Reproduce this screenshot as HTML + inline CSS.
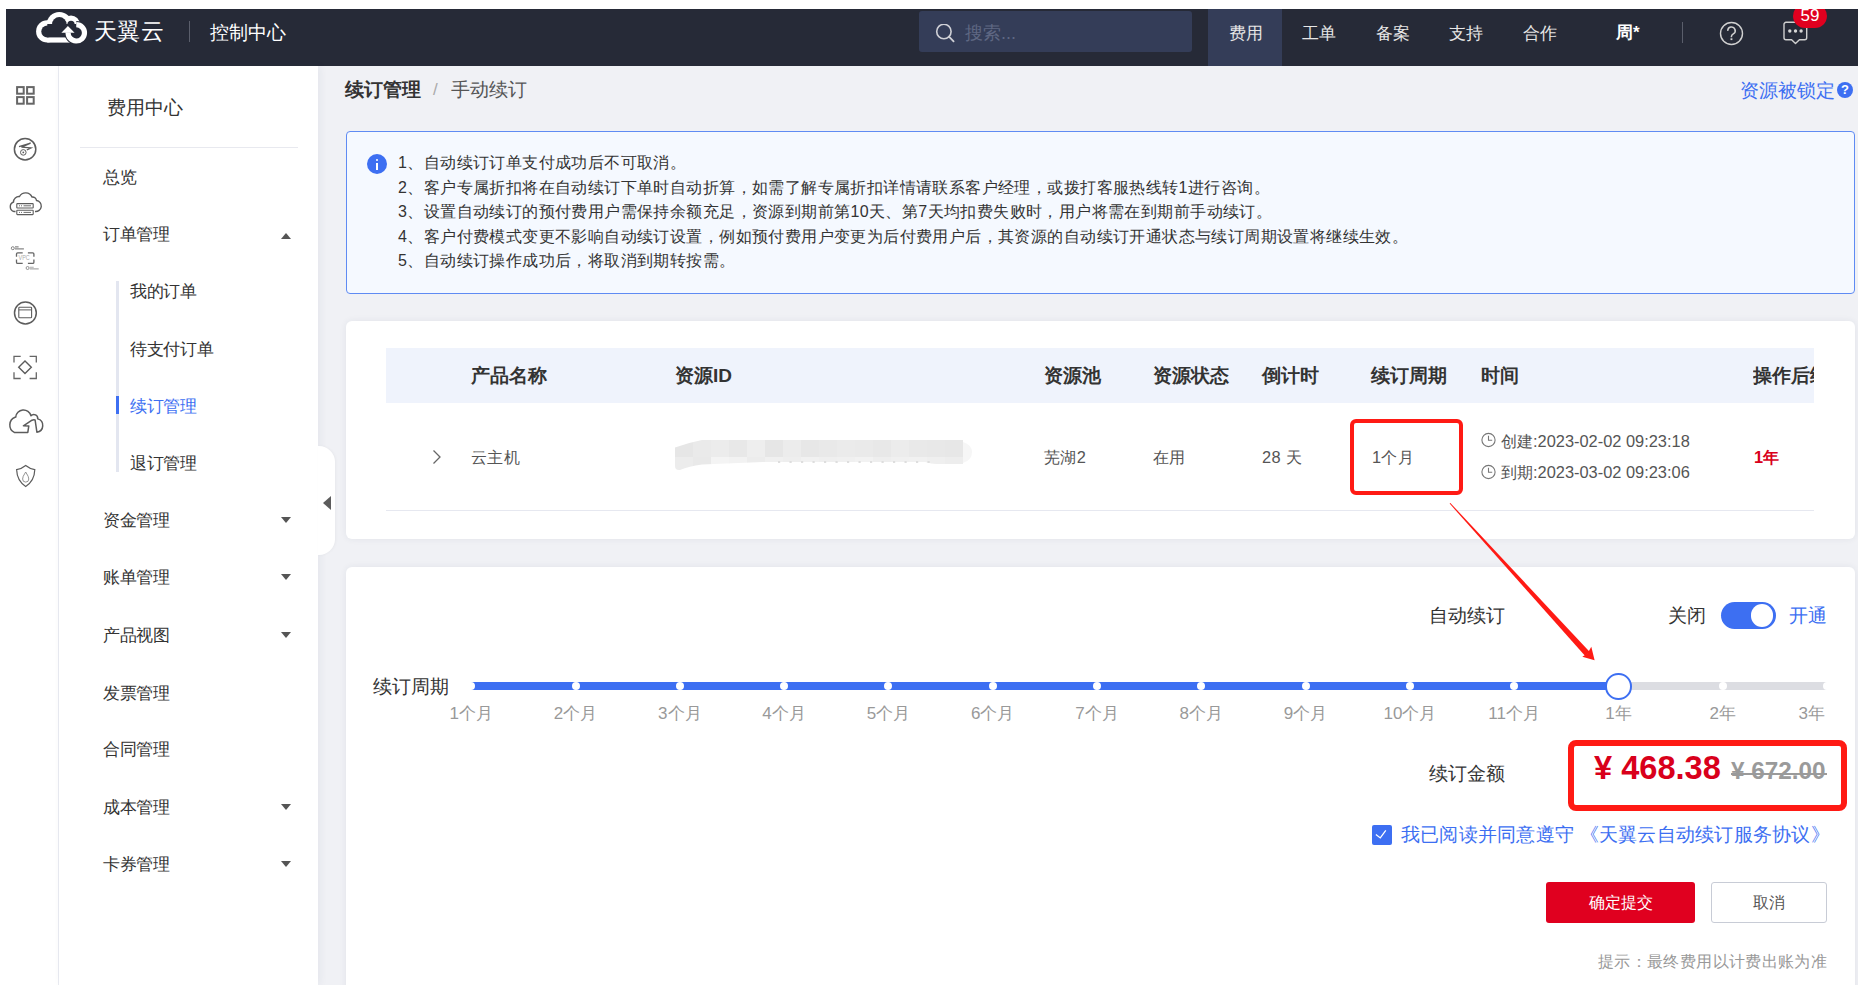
<!DOCTYPE html>
<html><head><meta charset="utf-8">
<style>
*{box-sizing:border-box;margin:0;padding:0}
html,body{width:1865px;height:1007px;overflow:hidden;background:#fff;font-family:"Liberation Sans",sans-serif;color:#333}
.a{position:absolute;white-space:nowrap}
#app{position:absolute;left:6px;top:9px;width:1852px;height:976px;background:#f0f1f5;overflow:hidden}
#hdr{position:absolute;left:0;top:0;width:1852px;height:57px;background:#262a37;overflow:hidden}
#rail{position:absolute;left:0;top:57px;width:53px;height:919px;background:#fff;border-right:1px solid #eaecf2}
#menu{position:absolute;left:53px;top:57px;width:259px;height:919px;background:#fff;box-shadow:2px 0 8px rgba(40,50,90,0.06)}
.mi{position:absolute;left:103px;font-size:17px;letter-spacing:-0.4px;line-height:24px;color:#333}
.tri-d{position:absolute;left:281px;width:0;height:0;border-left:5px solid transparent;border-right:5px solid transparent;border-top:6px solid #555}
.tri-u{position:absolute;left:281px;width:0;height:0;border-left:5px solid transparent;border-right:5px solid transparent;border-bottom:6px solid #555}
.sub{position:absolute;left:130px;font-size:17px;letter-spacing:-0.3px;line-height:24px;color:#333}
.card{position:absolute;background:#fff;border-radius:6px;box-shadow:0 0 7px rgba(40,50,90,0.07)}
.th{position:absolute;top:0;font-size:19px;font-weight:bold;line-height:55px;color:#333}
.td{position:absolute;font-size:16.4px;letter-spacing:0.35px;line-height:24px;color:#555}
.lbl{position:absolute;font-size:17px;line-height:24px;color:#999;text-align:center;width:80px}
.dot{position:absolute;width:8px;height:8px;border-radius:50%;background:#fff}
</style></head><body>
<div id="app">
  <div id="hdr">
    <svg class="a" style="left:24px;top:0" width="70" height="41" viewBox="0 0 70 41">
      <defs><mask id="cm"><rect width="70" height="41" fill="#fff"/><g fill="#000"><circle cx="17.3" cy="22.4" r="6.0"/><circle cx="29.3" cy="15.4" r="7.3"/><circle cx="41" cy="15.3" r="3.6"/><circle cx="46.3" cy="23.8" r="5.6"/><rect x="17.3" y="15" width="29" height="13.4"/></g></mask></defs>
      <g fill="#fff" mask="url(#cm)"><circle cx="17.3" cy="22.4" r="11.2"/><circle cx="29.3" cy="15.4" r="12.5"/><circle cx="41" cy="15.3" r="8.8"/><circle cx="46.3" cy="23.8" r="10.8"/><rect x="17.3" y="15" width="29" height="18.6"/></g>
      <path d="M38.1 23.8 A8.2 8.2 0 1 0 46.3 15.6" fill="none" stroke="#262a37" stroke-width="7.4"/>
      <path d="M38.1 23.3 A8.2 8.2 0 1 0 46.3 15.6" fill="none" stroke="#fff" stroke-width="5.2"/>
      <path d="M31.4 23.8 L37.9 17.1 L44.6 23.8 Z" fill="#fff"/>
    </svg>
    <div class="a" style="left:88px;top:7px;font-size:23px;line-height:30px;color:#fff;letter-spacing:0.4px">天翼云</div>
    <div class="a" style="left:183px;top:12px;width:1px;height:21px;background:#5a5e6b"></div>
    <div class="a" style="left:204px;top:11px;font-size:19px;line-height:26px;color:#fff">控制中心</div>
    <div class="a" style="left:913px;top:2px;width:273px;height:41px;background:#343d58;border-radius:3px"></div>
    <svg class="a" style="left:929px;top:15px" width="22" height="20" viewBox="0 0 22 20"><circle cx="8.9" cy="7.5" r="7.2" fill="none" stroke="#cfd0d6" stroke-width="1.6"/><path d="M14 12.7 L18.6 17.4" stroke="#cfd0d6" stroke-width="1.8" stroke-linecap="round"/></svg>
    <div class="a" style="left:959px;top:11px;font-size:18px;line-height:26px;color:#5f6883">搜索...</div>
    <div class="a" style="left:1202px;top:0;width:74px;height:57px;background:#343d58"></div>
    <div class="a" style="left:1223px;top:13px;font-size:17px;line-height:24px;color:#e6e6e6">费用</div>
    <div class="a" style="left:1296px;top:13px;font-size:17px;line-height:24px;color:#e6e6e6">工单</div>
    <div class="a" style="left:1370px;top:13px;font-size:17px;line-height:24px;color:#e6e6e6">备案</div>
    <div class="a" style="left:1443px;top:13px;font-size:17px;line-height:24px;color:#e6e6e6">支持</div>
    <div class="a" style="left:1517px;top:13px;font-size:17px;line-height:24px;color:#e6e6e6">合作</div>
    <div class="a" style="left:1610px;top:12px;font-size:17px;line-height:24px;color:#fff;font-weight:bold">周*</div>
    <div class="a" style="left:1676px;top:13px;width:1px;height:21px;background:#5a5e6b"></div>
    <svg class="a" style="left:1712px;top:12px" width="26" height="26" viewBox="0 0 26 26"><circle cx="13.5" cy="12.5" r="11" fill="none" stroke="#d0d0d0" stroke-width="1.4"/><path d="M9.8 9.9 A3.7 3.7 0 1 1 15.3 12.9 Q13.4 14.1 13.4 15.6 V16.3" fill="none" stroke="#d0d0d0" stroke-width="1.5"/><rect x="12.5" y="17.3" width="1.9" height="1.8" fill="#d0d0d0"/></svg>
    <svg class="a" style="left:1776px;top:12px" width="28" height="26" viewBox="0 0 28 26"><path d="M4 1.3 H22.7 A2 2 0 0 1 24.7 3.3 V16.7 A2 2 0 0 1 22.7 18.7 H17.4 L13.5 22.6 L9.6 18.7 H4 A2 2 0 0 1 2 16.7 V3.3 A2 2 0 0 1 4 1.3 Z" fill="none" stroke="#cfcfcf" stroke-width="1.4" stroke-linejoin="round"/><circle cx="7.8" cy="10" r="1.7" fill="#d6d6d6"/><circle cx="13.5" cy="10" r="1.7" fill="#d6d6d6"/><circle cx="19.1" cy="10" r="1.7" fill="#d6d6d6"/></svg>
    <div class="a" style="left:1786.8px;top:-5.2px;width:34.2px;height:24px;border-radius:12px;background:#e0001f"></div><div class="a" style="left:1786.8px;top:-3px;width:34.2px;font-size:17px;line-height:19px;text-align:center;color:#fff">59</div>
  </div>

  <div id="rail"></div>
  <div id="menu"></div>
</div>
<!-- rail icons (absolute) -->
<svg class="a" style="left:0;top:66px" width="58" height="440" viewBox="0 66 58 440" fill="none" stroke="#5c5c5c" stroke-width="1.5">
  <g stroke-width="2" stroke="#666"><rect x="17.1" y="87.1" width="6.6" height="6.6"/><rect x="27.1" y="87.1" width="6.6" height="6.6"/><rect x="17.1" y="97.1" width="6.6" height="6.6"/><rect x="27.1" y="97.1" width="6.6" height="6.6"/></g>
  <circle cx="25.1" cy="149.2" r="10.7"/>
  <path d="M19 146.6 L30.6 143.2 L21.5 147.2 L31 147.9 L26.8 150" stroke-width="1.3"/>
  <circle cx="23.3" cy="152.4" r="2.8" stroke-width="1"/><circle cx="23.3" cy="152.4" r="0.9" fill="#5c5c5c" stroke="none"/>
  <path d="M15.5 211.5 H14 A5 5 0 0 1 13.5 202 A5.5 5.5 0 0 1 19.5 196.5 A7 7 0 0 1 32 197 A4 4 0 0 1 36.5 200.5 A5.5 5.5 0 0 1 35 211.5" stroke-width="1.4"/>
  <rect x="16.8" y="203.6" width="16.4" height="4.4" rx="0.6" stroke-width="1.1"/><rect x="16.8" y="210.2" width="16.4" height="4.4" rx="0.6" stroke-width="1.1"/>
  <path d="M19 205.8 H20 M21 205.8 H22 M23.5 205.8 H31 M19 212.4 H20 M21 212.4 H22 M23.5 212.4 H31" stroke-width="0.9"/>
  <path d="M16.5 256.7 V254 Q16.5 252.8 17.7 252.8 H22.7 M27.9 252.8 H32.7 Q33.9 252.8 33.9 254 V256.7 M33.9 259.5 V262.2 Q33.9 263.4 32.7 263.4 H27.9 M22.7 263.4 H17.7 Q16.5 263.4 16.5 262.2 V259.5" stroke-width="1.3" stroke="#666"/>
  <text x="24.2" y="260.4" font-size="6.6" font-family="Liberation Sans" fill="#aaa" stroke="none" text-anchor="middle" textLength="11.2" lengthAdjust="spacingAndGlyphs">VPC</text>
  <circle cx="12.8" cy="248.2" r="1.5" stroke-width="0.9" stroke="#777"/><path d="M15 246.9 H18.6 M15 248.9 H23.9" stroke-width="1.1" stroke="#888"/>
  <circle cx="27.6" cy="268" r="1.5" stroke-width="0.9" stroke="#888"/><path d="M29.8 267.3 H33.7 M29.8 268.9 H38.7" stroke-width="1.1" stroke="#aaa"/>
  <circle cx="25.4" cy="313" r="10.9"/>
  <rect x="18.8" y="307.2" width="12.8" height="10.6" rx="0.8" stroke-width="1.1"/><path d="M18.8 309.9 H31.6" stroke-width="1"/>
  <path d="M14 362.6 V356.4 H20.7 M29.6 356.4 H36.3 V362.6 M36.3 372.3 V378.5 H29.6 M20.7 378.5 H14 V372.3" stroke-width="1.3" stroke="#666"/>
  <path d="M25 361 L31.3 367.3 L25 373.6 L18.7 367.3 Z" stroke-width="1.4"/>
  <path d="M14.3 432.4 H27.8 L28.8 425.9 L23.4 425.8 L32 420.2 Q33.5 419.6 35.1 420 L36.9 432.2 A6.8 6.8 0 0 0 37.7 418.9 A3.9 3.9 0 0 0 31 415.7 A7.8 7.8 0 0 0 15.7 417.1 L15.1 417.3 A8.3 8.3 0 0 0 14.3 432.4 Z" stroke-width="1.5" stroke-linejoin="round"/>
  <path d="M25.7 465.5 Q30 469 34.8 469.6 Q34.5 481 25.7 486.5 Q17 481 16.6 469.6 Q21.4 469 25.7 465.5 Z" stroke-width="1.2"/>
  <path d="M25.7 472 Q22.3 477 22.6 479 A3.1 3.1 0 0 0 28.8 479 Q29 477 25.7 472 Z" stroke-width="0.9" stroke="#888"/>
</svg>
<!-- menu -->
<div class="a" style="left:107px;top:95px;font-size:19px;line-height:26px;color:#333">费用中心</div>
<div class="a" style="left:80px;top:147px;width:218px;height:1px;background:#e8e9ef"></div>
<div class="mi" style="top:166px">总览</div>
<div class="mi" style="top:223px">订单管理</div><div class="tri-u" style="top:233px"></div>
<div class="a" style="left:116px;top:281px;width:3px;height:191px;background:#e3e6f0"></div>
<div class="a" style="left:116px;top:396px;width:3px;height:18px;background:#3d6ff2"></div>
<div class="sub" style="top:280px">我的订单</div>
<div class="sub" style="top:338px">待支付订单</div>
<div class="sub" style="top:395px;color:#3d6ff2">续订管理</div>
<div class="sub" style="top:452px">退订管理</div>
<div class="mi" style="top:509px">资金管理</div><div class="tri-d" style="top:517px"></div>
<div class="mi" style="top:566px">账单管理</div><div class="tri-d" style="top:574px"></div>
<div class="mi" style="top:624px">产品视图</div><div class="tri-d" style="top:632px"></div>
<div class="mi" style="top:682px">发票管理</div>
<div class="mi" style="top:738px">合同管理</div>
<div class="mi" style="top:796px">成本管理</div><div class="tri-d" style="top:804px"></div>
<div class="mi" style="top:853px">卡券管理</div><div class="tri-d" style="top:861px"></div>
<!-- collapse handle -->
<div class="a" style="left:318px;top:446px;width:17px;height:109px;background:#fff;border-radius:0 16px 16px 0;box-shadow:1px 0 3px rgba(0,0,0,0.04)"></div>
<div class="a" style="left:323px;top:496px;width:0;height:0;border-top:7.5px solid transparent;border-bottom:7.5px solid transparent;border-right:8px solid #5c5c5c"></div>
<!-- breadcrumb -->
<div class="a" style="left:345px;top:77px;font-size:19px;line-height:26px;font-weight:bold;color:#333">续订管理</div>
<div class="a" style="left:433px;top:77px;font-size:17px;line-height:26px;color:#aaa">/</div>
<div class="a" style="left:451px;top:77px;font-size:19px;line-height:26px;color:#555">手动续订</div>
<div class="a" style="left:1740px;top:78px;font-size:19px;line-height:26px;color:#3d6ff2">资源被锁定</div>
<div class="a" style="left:1837px;top:82px;width:16px;height:16px;border-radius:50%;background:#3d6ff2;color:#fff;font-size:13px;line-height:16px;text-align:center;font-weight:bold">?</div>
<!-- info box -->
<div class="a" style="left:346px;top:131px;width:1509px;height:163px;background:#f5f9ff;border:1px solid #5f8bf3;border-radius:4px"></div>
<div class="a" style="left:367px;top:154px;width:20px;height:20px;border-radius:50%;background:#3d6ff2"></div>
<div class="a" style="left:376px;top:159px;width:2.4px;height:2.4px;background:#fff;border-radius:50%"></div>
<div class="a" style="left:376px;top:163px;width:2.4px;height:7px;background:#fff"></div>
<div class="a" style="left:398px;top:151px;font-size:16px;letter-spacing:0.41px;line-height:24.6px;color:#333">1、自动续订订单支付成功后不可取消。<br>2、客户专属折扣将在自动续订下单时自动折算，如需了解专属折扣详情请联系客户经理，或拨打客服热线转1进行咨询。<br>3、设置自动续订的预付费用户需保持余额充足，资源到期前第10天、第7天均扣费失败时，用户将需在到期前手动续订。<br>4、客户付费模式变更不影响自动续订设置，例如预付费用户变更为后付费用户后，其资源的自动续订开通状态与续订周期设置将继续生效。<br>5、自动续订操作成功后，将取消到期转按需。</div>
<!-- card 1 -->
<div class="card" style="left:346px;top:321px;width:1509px;height:218px"></div>
<div class="a" style="left:386px;top:348px;width:1428px;height:55px;background:#eff3fc"></div>
<div class="th" style="left:471px;top:348px">产品名称</div>
<div class="th" style="left:675px;top:348px">资源ID</div>
<div class="th" style="left:1044px;top:348px">资源池</div>
<div class="th" style="left:1153px;top:348px">资源状态</div>
<div class="th" style="left:1262px;top:348px">倒计时</div>
<div class="th" style="left:1371px;top:348px">续订周期</div>
<div class="th" style="left:1481px;top:348px">时间</div>
<div class="a" style="left:1753px;top:348px;width:61px;height:55px;overflow:hidden"><div class="th" style="left:0;top:0">操作后续订</div></div>
<svg class="a" style="left:430px;top:449px" width="14" height="16" viewBox="0 0 14 16"><path d="M3.5 1.5 L10 8 L3.5 14.5" fill="none" stroke="#666" stroke-width="1.3"/></svg>
<div class="td" style="left:471px;top:445px">云主机</div>
<svg class="a" style="left:675px;top:440px" width="300" height="31" viewBox="0 0 300 31"><defs><clipPath id="bl"><path d="M0 7.5 Q14 2.5 27 0 H288 V24 H263 Q258 24.5 250 22 H88 L27 24.5 Q14 26 5 30 Q0 30.5 0 26 Z"/></clipPath></defs><g clip-path="url(#bl)"><rect x="0.0" y="0" width="18.5" height="17.2" fill="rgb(230,230,230)"/><rect x="0.0" y="17" width="18.5" height="14" fill="rgb(236,236,236)"/><rect x="18.0" y="0" width="18.5" height="17.2" fill="rgb(234,234,234)"/><rect x="18.0" y="17" width="18.5" height="14" fill="rgb(233,233,233)"/><rect x="36.0" y="0" width="18.5" height="17.2" fill="rgb(236,236,236)"/><rect x="36.0" y="17" width="18.5" height="14" fill="rgb(244,244,244)"/><rect x="54.0" y="0" width="18.5" height="17.2" fill="rgb(232,232,232)"/><rect x="54.0" y="17" width="18.5" height="14" fill="rgb(242,242,242)"/><rect x="72.0" y="0" width="18.5" height="17.2" fill="rgb(238,238,238)"/><rect x="72.0" y="17" width="18.5" height="14" fill="rgb(236,236,236)"/><rect x="90.0" y="0" width="18.5" height="17.2" fill="rgb(230,230,230)"/><rect x="90.0" y="17" width="18.5" height="14" fill="rgb(240,240,240)"/><rect x="108.0" y="0" width="18.5" height="17.2" fill="rgb(236,236,236)"/><rect x="108.0" y="17" width="18.5" height="14" fill="rgb(238,238,238)"/><rect x="126.0" y="0" width="18.5" height="17.2" fill="rgb(231,231,231)"/><rect x="126.0" y="17" width="18.5" height="14" fill="rgb(241,241,241)"/><rect x="144.0" y="0" width="18.5" height="17.2" fill="rgb(233,233,233)"/><rect x="144.0" y="17" width="18.5" height="14" fill="rgb(239,239,239)"/><rect x="162.0" y="0" width="18.5" height="17.2" fill="rgb(235,235,235)"/><rect x="162.0" y="17" width="18.5" height="14" fill="rgb(240,240,240)"/><rect x="180.0" y="0" width="18.5" height="17.2" fill="rgb(234,234,234)"/><rect x="180.0" y="17" width="18.5" height="14" fill="rgb(242,242,242)"/><rect x="198.0" y="0" width="18.5" height="17.2" fill="rgb(232,232,232)"/><rect x="198.0" y="17" width="18.5" height="14" fill="rgb(238,238,238)"/><rect x="216.0" y="0" width="18.5" height="17.2" fill="rgb(236,236,236)"/><rect x="216.0" y="17" width="18.5" height="14" fill="rgb(240,240,240)"/><rect x="234.0" y="0" width="18.5" height="17.2" fill="rgb(233,233,233)"/><rect x="234.0" y="17" width="18.5" height="14" fill="rgb(241,241,241)"/><rect x="252.0" y="0" width="18.5" height="17.2" fill="rgb(232,232,232)"/><rect x="252.0" y="17" width="18.5" height="14" fill="rgb(239,239,239)"/><rect x="270.0" y="0" width="18.5" height="17.2" fill="rgb(231,231,231)"/><rect x="270.0" y="17" width="18.5" height="14" fill="rgb(237,237,237)"/></g><path d="M288 2 Q297 5 297 12 Q297 20 288 23" fill="#f6f6f6"/><g fill="#dedede"><rect x="103.0" y="21" width="2.2" height="2" /><rect x="114.5" y="21" width="2.2" height="2" /><rect x="126.0" y="21" width="2.2" height="2" /><rect x="137.5" y="21" width="2.2" height="2" /><rect x="149.0" y="21" width="2.2" height="2" /><rect x="160.5" y="21" width="2.2" height="2" /><rect x="172.0" y="21" width="2.2" height="2" /><rect x="183.5" y="21" width="2.2" height="2" /><rect x="195.0" y="21" width="2.2" height="2" /><rect x="206.5" y="21" width="2.2" height="2" /><rect x="218.0" y="21" width="2.2" height="2" /><rect x="229.5" y="21" width="2.2" height="2" /><rect x="241.0" y="21" width="2.2" height="2" /><rect x="252.5" y="21" width="2.2" height="2" /></g></svg>
<div class="td" style="left:1044px;top:445px">芜湖2</div>
<div class="td" style="left:1153px;top:445px">在用</div>
<div class="td" style="left:1262px;top:445px">28 天</div>
<div class="td" style="left:1372px;top:445px">1个月</div>
<svg class="a" style="left:1480px;top:432px" width="17" height="48" viewBox="0 0 17 48" fill="none" stroke="#777" stroke-width="1.1"><circle cx="8.5" cy="8" r="6.6"/><path d="M8.5 3.8 V8.3 H12.2"/><circle cx="8.5" cy="40" r="6.6"/><path d="M8.5 35.8 V40.3 H12.2"/></svg>
<div class="td" style="left:1501px;top:429px;letter-spacing:0">创建:2023-02-02 09:23:18</div>
<div class="td" style="left:1501px;top:460px;letter-spacing:0">到期:2023-03-02 09:23:06</div>
<div class="td" style="left:1754px;top:445px;color:#d9001b;font-weight:bold">1年</div>
<div class="a" style="left:386px;top:510px;width:1428px;height:1px;background:#e6e8f0"></div>
<div class="a" style="left:1350px;top:419px;width:113px;height:76px;border:4.6px solid #ff1a14;border-radius:6px"></div>
<!-- card 2 -->
<div class="card" style="left:346px;top:567px;width:1509px;height:430px"></div>
<div class="a" style="left:1429px;top:603px;font-size:19px;line-height:26px;color:#333">自动续订</div>
<div class="a" style="left:1668px;top:603px;font-size:19px;line-height:26px;color:#333">关闭</div>
<div class="a" style="left:1721px;top:602px;width:55px;height:27px;border-radius:14px;background:#3d6ff2"></div>
<div class="a" style="left:1750.6px;top:603.8px;width:22.8px;height:22.8px;border-radius:50%;background:#fff"></div>
<div class="a" style="left:1789px;top:603px;font-size:19px;line-height:26px;color:#3d6ff2">开通</div>
<div class="a" style="left:373px;top:674px;font-size:19px;line-height:26px;color:#333">续订周期</div>
<div class="a" style="left:471px;top:682px;width:1356px;height:8px;background:#dcdde2"></div>
<div class="a" style="left:471px;top:682px;width:1148px;height:8px;background:#3d6ff2"></div><div class="dot" style="left:467.2px;top:682px"></div>
<div class="dot" style="left:571.5px;top:682px"></div><div class="dot" style="left:675.8px;top:682px"></div><div class="dot" style="left:780.1px;top:682px"></div><div class="dot" style="left:884.4px;top:682px"></div><div class="dot" style="left:988.7px;top:682px"></div><div class="dot" style="left:1093.0px;top:682px"></div><div class="dot" style="left:1197.3px;top:682px"></div><div class="dot" style="left:1301.6px;top:682px"></div><div class="dot" style="left:1405.9px;top:682px"></div><div class="dot" style="left:1510.2px;top:682px"></div><div class="dot" style="left:1718.8px;top:682px"></div><div class="dot" style="left:1823.1px;top:682px"></div>
<div class="a" style="left:1605.1px;top:673px;width:26.6px;height:26.6px;border-radius:50%;background:#fff;border:2.5px solid #3d6ff2"></div>
<div class="lbl" style="left:431.2px;top:702px">1个月</div><div class="lbl" style="left:535.5px;top:702px">2个月</div><div class="lbl" style="left:639.8px;top:702px">3个月</div><div class="lbl" style="left:744.1px;top:702px">4个月</div><div class="lbl" style="left:848.4px;top:702px">5个月</div><div class="lbl" style="left:952.7px;top:702px">6个月</div><div class="lbl" style="left:1057.0px;top:702px">7个月</div><div class="lbl" style="left:1161.3px;top:702px">8个月</div><div class="lbl" style="left:1265.6px;top:702px">9个月</div><div class="lbl" style="left:1369.9px;top:702px">10个月</div><div class="lbl" style="left:1474.2px;top:702px">11个月</div><div class="lbl" style="left:1578.5px;top:702px">1年</div><div class="lbl" style="left:1682.8px;top:702px">2年</div><div class="lbl" style="left:1745.0px;top:702px;text-align:right">3年</div>
<div class="a" style="left:1429px;top:761px;font-size:19px;line-height:26px;color:#333">续订金额</div>
<div class="a" style="left:1567.5px;top:739.5px;width:279px;height:71px;border:6.2px solid #ff1a14;border-radius:8px"></div>
<div class="a" style="left:1594px;top:749.5px;font-size:32.6px;line-height:36px;font-weight:bold;color:#d9001b">¥ 468.38</div>
<div class="a" style="left:1731px;top:757.3px;font-size:24.3px;line-height:28px;font-weight:bold;color:#9a9a9a">¥ 672.00</div><div class="a" style="left:1731px;top:772.5px;width:96px;height:2px;background:#9a9a9a"></div>
<div class="a" style="left:1372px;top:825px;width:19.5px;height:19.5px;border-radius:2px;background:#3d6ff2"></div>
<svg class="a" style="left:1372px;top:825px" width="20" height="20" viewBox="0 0 20 20"><path d="M3.9 9.4 L8.3 12.9 L13.8 5.4" fill="none" stroke="#fff" stroke-width="1.3"/></svg>
<div class="a" style="left:1401px;top:822px;font-size:19px;letter-spacing:0.24px;line-height:26px;color:#3d6ff2">我已阅读并同意遵守 《天翼云自动续订服务协议》</div>
<div class="a" style="left:1546px;top:882px;width:149px;height:41px;border-radius:3px;background:#e0001f;color:#fff;font-size:16px;line-height:41px;text-align:center">确定提交</div>
<div class="a" style="left:1711px;top:882px;width:116px;height:41px;border-radius:3px;background:#fff;border:1px solid #c8ccd6;color:#555;font-size:16px;line-height:39px;text-align:center">取消</div>
<div class="a" style="left:1598px;top:950px;font-size:16px;letter-spacing:0.36px;line-height:24px;color:#999">提示：最终费用以计费出账为准</div>
<!-- white border bottom / right of app -->
<div class="a" style="left:0;top:985px;width:1865px;height:22px;background:#fff"></div>
<div class="a" style="left:1858px;top:0;width:7px;height:1007px;background:#fff"></div>
<!-- arrow -->
<svg class="a" style="left:0;top:0" width="1865" height="1007" viewBox="0 0 1865 1007"><path d="M1450.4 503 L1589.8 652 L1585.2 656 L1449.6 503.6 Z" fill="#ff1a14"/><path d="M1594.6 660.2 L1582.3 656.8 L1587.5 653.5 L1591.3 646.8 Z" fill="#ff1a14"/></svg>
</body></html>
